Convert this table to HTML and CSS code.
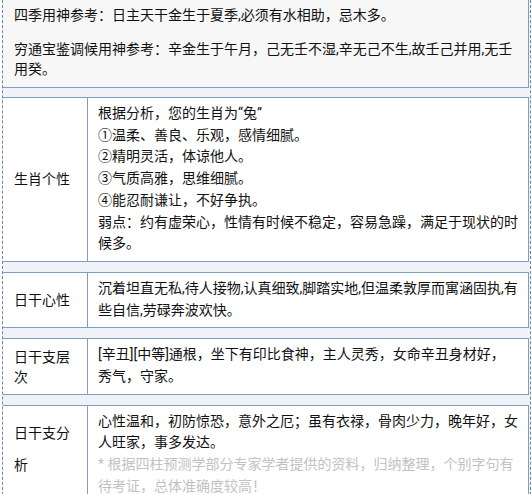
FILE: index.html
```html
<!DOCTYPE html>
<html lang="zh-CN">
<head>
<meta charset="utf-8">
<title>八字分析</title>
<link rel="stylesheet" href="styles.css">
</head>
<body>
<div class="wrap">
  <div class="intro">
    <p>四季用神参考：日主天干金生于夏季,必须有水相助，忌木多。</p>
    <p>穷通宝鉴调候用神参考：辛金生于午月，己无壬不湿,辛无己不生,故壬己并用,无壬用癸。</p>
  </div>

  <div class="row first">
    <div class="label">生肖个性</div>
    <div class="content">
      根据分析，您的生肖为“兔”<br>
      ①温柔、善良、乐观，感情细腻。<br>
      ②精明灵活，体谅他人。<br>
      ③气质高雅，思维细腻。<br>
      ④能忍耐谦让，不好争执。<br>
      弱点：约有虚荣心，性情有时候不稳定，容易急躁，满足于现状的时候多。
    </div>
  </div>

  <div class="row">
    <div class="label">日干心性</div>
    <div class="content">沉着坦直无私,待人接物,认真细致,脚踏实地,但温柔敦厚而寓涵固执,有些自信,劳碌奔波欢快。</div>
  </div>

  <div class="row">
    <div class="label">日干支层次</div>
    <div class="content">[辛丑][中等]通根，坐下有印比食神，主人灵秀，女命辛丑身材好，秀气，守家。</div>
  </div>

  <div class="row">
    <div class="label tall">日干支分析</div>
    <div class="content">
      心性温和，初防惊恐，意外之厄；虽有衣禄，骨肉少力，晚年好，女人旺家，事多发达。
      <div class="note">* 根据四柱预测学部分专家学者提供的资料，归纳整理，个别字句有待考证，总体准确度较高！</div>
    </div>
  </div>
</div>
</body>
</html>
```

FILE: styles.css
```css
html, body {
  margin: 0;
  padding: 0;
  background: #ffffff;
}

body {
  font-family: Roboto, "Noto Sans CJK SC", sans-serif;
  font-size: 14px;
  color: #111111;
}

.wrap {
  box-sizing: border-box;
  width: 529px;
  margin-left: 2px;
  min-height: 494px;
  border-left: 1px dashed #6a88ae;
  border-right: 1px dashed #6a88ae;
  background: #eff2f6;
  padding-bottom: 20px;
}

.intro {
  margin-right: 1px;
  background: #f7f7f7;
  border-right: 1px solid #7f9dc0;
  border-bottom: 1px solid #7f9dc0;
  padding: 5px 10px 8px 11px;
}

.intro p {
  margin: 0;
  line-height: 20px;
}

.intro p + p {
  margin-top: 14px;
}

.row {
  display: grid;
  grid-template-columns: 85px 1fr;
  margin: 10px 1px 0 0;
  border-top: 1px solid #7f9dc0;
  border-right: 1px solid #7f9dc0;
  border-bottom: 1px solid #7f9dc0;
  background: #ffffff;
}

.row.first {
  margin-top: 9px;
}

.label {
  box-sizing: border-box;
  border-right: 1px solid #7f9dc0;
  padding: 0 10px 0 11px;
  display: flex;
  align-items: center;
  line-height: 20px;
}

.label.tall {
  line-height: 32px;
  padding-bottom: 12px;
}

.content {
  padding: 5px 10px 6px 10px;
  line-height: 21.7px;
}

.note {
  color: #c2c2c2;
}
```
